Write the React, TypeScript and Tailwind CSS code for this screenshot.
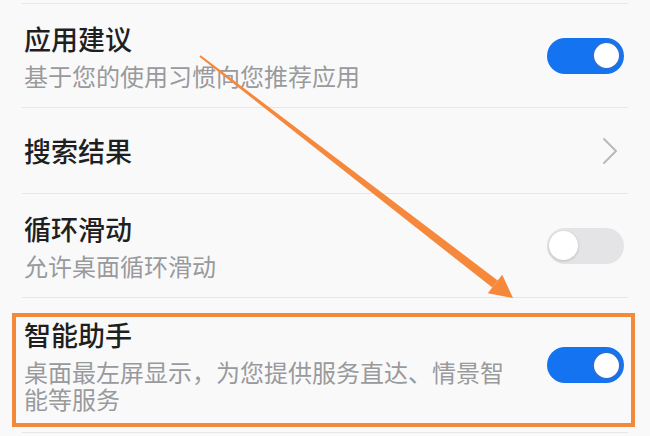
import type { ReactNode } from 'react'

function Divider() {
  return <div className="mx-[22px] h-px bg-[#e6e6e8]" />
}

function Toggle({ on }: { on: boolean }) {
  return on ? (
    <div className="flex h-[36px] w-[77px] items-center justify-end rounded-full bg-[#1473f0] pr-[3px]">
      <div className="h-[29px] w-[29px] rounded-full border-2 border-[#2a6fd6] bg-white" />
    </div>
  ) : (
    <div className="flex h-[36px] w-[77px] items-center rounded-full bg-[#e4e4e6] pl-[2px]">
      <div className="h-[29px] w-[29px] rounded-full bg-white shadow-[0_1px_3px_rgba(0,0,0,0.18)]" />
    </div>
  )
}

function Chevron() {
  return (
    <svg width="16" height="28" viewBox="0 0 16 28" className="mr-[6px]" fill="none">
      <polyline points="2,2 14,14 2,26" stroke="#b9b9bb" strokeWidth="2" strokeLinecap="round" strokeLinejoin="round" />
    </svg>
  )
}

function Row({
  title,
  sub,
  right,
  height,
}: {
  title: string
  sub?: string
  right: ReactNode
  height: string
}) {
  return (
    <div className={`flex items-center justify-between pl-[24px] pr-[26px] ${height}`}>
      <div className="max-w-[490px]">
        <div className="text-[27px] font-medium leading-[34px] text-[#1f1f1f]">{title}</div>
        {sub && <div className="mt-[6px] text-[24px] leading-[27px] text-[#999a9c]">{sub}</div>}
      </div>
      {right}
    </div>
  )
}

export default function App() {
  return (
    <div className="relative h-[436px] w-[650px] overflow-hidden bg-[#f9f9fa] font-['Noto_Sans_CJK_SC','Noto_Sans',sans-serif]">
      <div className="pt-[3px]">
        <Divider />
        <Row title="应用建议" sub="基于您的使用习惯向您推荐应用" right={<Toggle on />} height="h-[103px]" />
        <Divider />
        <Row title="搜索结果" right={<Chevron />} height="h-[85px]" />
        <Divider />
        <Row title="循环滑动" sub="允许桌面循环滑动" right={<Toggle on={false} />} height="h-[103px]" />
        <Divider />
        <Row
          title="智能助手"
          sub="桌面最左屏显示，为您提供服务直达、情景智能等服务"
          right={<Toggle on />}
          height="h-[134px]"
        />
        <Divider />
      </div>

      {/* annotation: highlight box */}
      <div className="pointer-events-none absolute left-[12px] top-[313px] h-[114px] w-[623px] border-4 border-[#f38a3b]" />

      {/* annotation: arrow */}
      <svg className="pointer-events-none absolute left-0 top-0" width="650" height="436" viewBox="0 0 650 436">
        <polygon points="200.6,55.3 497.7,280.4 492.3,287.6 199.4,56.7" fill="#f5883a" />
        <polygon points="513,298 487.8,293.3 502.2,274.7" fill="#f5883a" />
      </svg>
    </div>
  )
}
